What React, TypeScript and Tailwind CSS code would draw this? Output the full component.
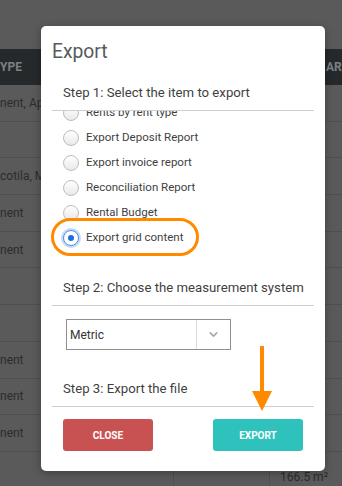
import React from "react";
import { ChevronDown } from "lucide-react";

const font = { fontFamily: 'Roboto, "Open Sans", sans-serif' };

function Radio({ checked }: { checked?: boolean }) {
  if (checked) {
    return (
      <span className="flex h-[16px] w-[16px] shrink-0 items-center justify-center rounded-full border border-[#4d90e0] bg-white shadow-[0_0_0_2px_rgba(90,150,230,0.35)]">
        <span className="h-[6px] w-[6px] rounded-full bg-[#1b6fe0]" />
      </span>
    );
  }
  return (
    <span className="h-[16px] w-[16px] shrink-0 rounded-full border border-[#bdbdbd] bg-gradient-to-b from-white to-[#e9e9e9]" />
  );
}

const items = [
  "Rents by rent type",
  "Export Deposit Report",
  "Export invoice report",
  "Reconciliation Report",
  "Rental Budget",
  "Export grid content",
];

const rows = [
  "nent, Apa",
  "",
  "cotila, Mu",
  "nent",
  "nent",
  "",
  "",
  "nent",
  "nent",
  "nent",
  "",
];

export default function App() {
  return (
    <div className="relative h-[486px] w-[342px] overflow-hidden bg-[#5b5b5b]" style={font}>
      {/* background page */}
      <div className="h-[49px] bg-[#5a5a5a]" />
      <div className="grid h-[36px] grid-cols-[173px_96px_73px] items-center bg-[#25292c] text-[12px] font-bold text-[#7d8083]">
        <div>YPE</div>
        <div />
        <div className="whitespace-nowrap pl-[57px]">AREA</div>
      </div>
      {rows.map((r, i) => (
        <div
          key={i}
          className="grid h-[36.7px] grid-cols-[173px_96px_73px] items-center border-b border-[#4f4f4f] bg-[#5a5a5a] text-[12px] text-[#2c2c2c]"
        >
          <div className="whitespace-nowrap">{r}</div>
          <div className="h-full border-l border-[#4f4f4f]" />
          <div className="flex h-full items-end border-l border-[#4f4f4f] pl-[10px] pb-[2px] text-[#2c2c2c]">
            {i === rows.length - 1 ? "166.5 m²" : ""}
          </div>
        </div>
      ))}

      {/* modal */}
      <div className="absolute left-[41px] top-[26px] h-[445px] w-[284px] rounded-[5px] bg-white px-[11px] pt-[12px] shadow-[0_2px_8px_rgba(0,0,0,0.3)]">
        <div className="text-[19.3px] leading-[28px] text-[#555a5e]">Export</div>
        <div className="mt-[17px] whitespace-nowrap border-b border-[#cfcfcf] px-[11px] pb-[7px] text-[13.2px] leading-[20px] text-[#3f3f3f]">
          Step 1: Select the item to export
        </div>
        <div className="h-[167px] overflow-hidden">
          <div className="mt-[-11px] flex flex-col">
            {items.map((it, i) => (
              <div key={it} className="flex h-[25px] items-center gap-[7px] pl-[11px] text-[11.5px] text-[#3f3f3f]">
                <Radio checked={i === items.length - 1} />
                <span>{it}</span>
              </div>
            ))}
          </div>
        </div>
        <div className="whitespace-nowrap border-b border-[#cfcfcf] px-[11px] pb-[7px] text-[13.2px] leading-[20px] text-[#3f3f3f]">
          Step 2: Choose the measurement system
        </div>
        <div className="ml-[14px] mt-[13px] flex h-[31px] w-[165px] items-center border border-[#8f8f8f]">
          <span className="flex-1 pl-[3px] text-[12px] text-[#333]">Metric</span>
          <span className="flex h-full w-[34px] items-center justify-center border-l border-[#dcdcdc]">
            <ChevronDown size={13} strokeWidth={3} color="#a8a8a8" />
          </span>
        </div>
        <div className="mt-[29px] whitespace-nowrap border-b border-[#cfcfcf] px-[11px] pb-[7px] text-[13.2px] leading-[20px] text-[#3f3f3f]">
          Step 3: Export the file
        </div>
        <div className="mt-[12px] flex justify-between px-[11px]">
          <button className="h-[32px] w-[90px] rounded-[3px] bg-[#c85252] text-[10px] font-bold text-white">
            CLOSE
          </button>
          <button className="h-[32px] w-[90px] rounded-[3px] bg-[#2fc2bd] text-[10px] font-bold text-white">
            EXPORT
          </button>
        </div>
      </div>

      {/* highlight */}
      <div className="pointer-events-none absolute left-[51px] top-[218px] h-[38px] w-[148px] rounded-[19px] border-[3px] border-[#ff8a00]" />

      {/* arrow */}
      <svg className="absolute left-[252px] top-[346px]" width="20" height="66" viewBox="0 0 20 66">
        <rect x="8" y="0" width="4" height="46" fill="#ff8a00" />
        <polygon points="0,45 20,45 10,65" fill="#ff8a00" />
      </svg>
    </div>
  );
}
